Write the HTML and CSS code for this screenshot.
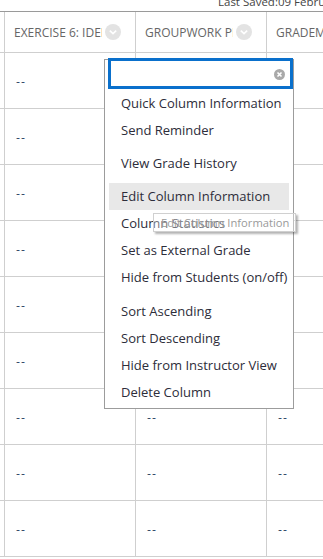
FILE: index.html
```html
<!DOCTYPE html>
<html>
<head>
<meta charset="utf-8">
<link rel="stylesheet" href="styles.css">
</head>
<body>
<div class="page">
  <div class="topbar"><span class="saved">Last Saved:09 February 2017 10:42</span></div>
  <div class="grid">
    <div class="row head">
      <div class="cell c0"></div>
      <div class="cell hc"><span class="htext">EXERCISE 6: IDENTITY</span><span class="chev"><svg width="16" height="16" viewBox="0 0 16 16"><circle cx="8" cy="8" r="8" fill="#e3e3e3"/><path d="M4.8 6.6 L8 9.6 L11.2 6.6" fill="none" stroke="#fff" stroke-width="1.6"/></svg></span></div>
      <div class="cell hc"><span class="htext">GROUPWORK PRESENTATION</span><span class="chev"><svg width="16" height="16" viewBox="0 0 16 16"><circle cx="8" cy="8" r="8" fill="#e3e3e3"/><path d="M4.8 6.6 L8 9.6 L11.2 6.6" fill="none" stroke="#fff" stroke-width="1.6"/></svg></span></div>
      <div class="cell hc last"><span class="htext">GRADEMARK</span></div>
    </div>
    <div class="row"><div class="cell c0"></div><div class="cell"><span class="dash">--</span></div><div class="cell"><span class="dash">--</span></div><div class="cell last"><span class="dash">--</span></div></div>
    <div class="row"><div class="cell c0"></div><div class="cell"><span class="dash">--</span></div><div class="cell"><span class="dash">--</span></div><div class="cell last"><span class="dash">--</span></div></div>
    <div class="row"><div class="cell c0"></div><div class="cell"><span class="dash">--</span></div><div class="cell"><span class="dash">--</span></div><div class="cell last"><span class="dash">--</span></div></div>
    <div class="row"><div class="cell c0"></div><div class="cell"><span class="dash">--</span></div><div class="cell"><span class="dash">--</span></div><div class="cell last"><span class="dash">--</span></div></div>
    <div class="row"><div class="cell c0"></div><div class="cell"><span class="dash">--</span></div><div class="cell"><span class="dash">--</span></div><div class="cell last"><span class="dash">--</span></div></div>
    <div class="row"><div class="cell c0"></div><div class="cell"><span class="dash">--</span></div><div class="cell"><span class="dash">--</span></div><div class="cell last"><span class="dash">--</span></div></div>
    <div class="row"><div class="cell c0"></div><div class="cell"><span class="dash">--</span></div><div class="cell"><span class="dash">--</span></div><div class="cell last"><span class="dash">--</span></div></div>
    <div class="row"><div class="cell c0"></div><div class="cell"><span class="dash">--</span></div><div class="cell"><span class="dash">--</span></div><div class="cell last"><span class="dash">--</span></div></div>
    <div class="row"><div class="cell c0"></div><div class="cell"><span class="dash">--</span></div><div class="cell"><span class="dash">--</span></div><div class="cell last"><span class="dash">--</span></div></div>
  </div>

  <div class="menu">
    <div class="search">
      <span class="clear"><svg width="11" height="11" viewBox="0 0 11 11"><circle cx="5.5" cy="5.5" r="5.5" fill="#a9a9a9"/><path d="M3.5 3.5 L7.5 7.5 M7.5 3.5 L3.5 7.5" stroke="#fff" stroke-width="1.6"/></svg></span>
    </div>
    <ul class="group g1">
      <li>Quick Column Information</li>
      <li>Send Reminder</li>
    </ul>
    <ul class="group">
      <li>View Grade History</li>
    </ul>
    <ul class="group">
      <li class="hover">Edit Column Information</li>
      <li>Column Statistics</li>
      <li>Set as External Grade</li>
      <li>Hide from Students (on/off)</li>
    </ul>
    <ul class="group gl">
      <li>Sort Ascending</li>
      <li>Sort Descending</li>
      <li>Hide from Instructor View</li>
      <li>Delete Column</li>
    </ul>
  </div>
  <div class="tooltip">Edit Column Information</div>
</div>
</body>
</html>
```

FILE: styles.css
```css
html, body {
  margin: 0;
  padding: 0;
  background: #fff;
}
body {
  width: 323px;
  height: 559px;
  overflow: hidden;
  font-family: "Open Sans", "Liberation Sans", sans-serif;
}
.page {
  position: relative;
  width: 323px;
  height: 559px;
  overflow: hidden;
}
.topbar {
  height: 11px;
  overflow: hidden;
  border-bottom: 1px solid #9a9a9a;
  white-space: nowrap;
}
.saved {
  display: block;
  margin-top: -6px;
  padding-left: 218px;
  font-size: 11.5px;
  line-height: 16px;
  color: #444;
}
.grid {
  display: flex;
  flex-direction: column;
}
.row {
  display: flex;
  height: 55px;
  border-bottom: 1px solid #cfcfcf;
}
.row.head {
  height: 40px;
}
.cell {
  flex: none;
  width: 130px;
  border-left: 1px solid #cfcfcf;
  display: flex;
  align-items: center;
  overflow: hidden;
  white-space: nowrap;
}
.cell.c0 {
  width: 4px;
  border-left: none;
}
.cell.last {
  width: 80px;
}
.hc {
  padding-left: 9px;
  width: 121px;
}
.hc.last {
  width: 71px;
}
.htext {
  width: 88px;
  overflow: hidden;
  font-size: 12px;
  color: #666;
}
.chev {
  width: 16px;
  height: 16px;
  margin-left: 3px;
  display: flex;
}
.dash {
  padding-left: 11px;
  font-family: "DejaVu Sans", sans-serif;
  font-size: 11px;
  color: #1d3a5e;
  letter-spacing: 1px;
  margin-top: 1px;
}
.menu {
  position: absolute;
  left: 104px;
  top: 59px;
  width: 188px;
  height: 348px;
  border: 1px solid #9c9c9c;
  background: #fff;
}
.search {
  position: absolute;
  left: 3px;
  top: -2px;
  width: 179px;
  height: 25px;
  border: 3px solid #0a70cc;
  background: #fff;
  display: flex;
  align-items: center;
  justify-content: flex-end;
}
.clear {
  display: flex;
  margin-right: 5px;
  margin-top: 1px;
}
.group {
  list-style: none;
  margin: 0;
  padding: 0;
}
.group.g1 {
  margin-top: 30px;
}
.group + .group {
  margin-top: 6px;
}
.group.gl {
  margin-top: 7px;
}
.group li {
  height: 27px;
  line-height: 27px;
  margin: 0 4px;
  padding-left: 12px;
  font-size: 13px;
  color: #2d2d3a;
  white-space: nowrap;
}
.group li.hover {
  background: #e8e8e8;
}
.tooltip {
  position: absolute;
  left: 153px;
  top: 213px;
  height: 17px;
  line-height: 17px;
  padding: 0 6px 0 7px;
  font-size: 11.2px;
  color: #9a9a9a;
  border: 1px solid #d0d0d0;
  background: rgba(255,255,255,0.35);
  box-shadow: 2px 2px 2px rgba(0,0,0,0.3);
  white-space: nowrap;
}
```
